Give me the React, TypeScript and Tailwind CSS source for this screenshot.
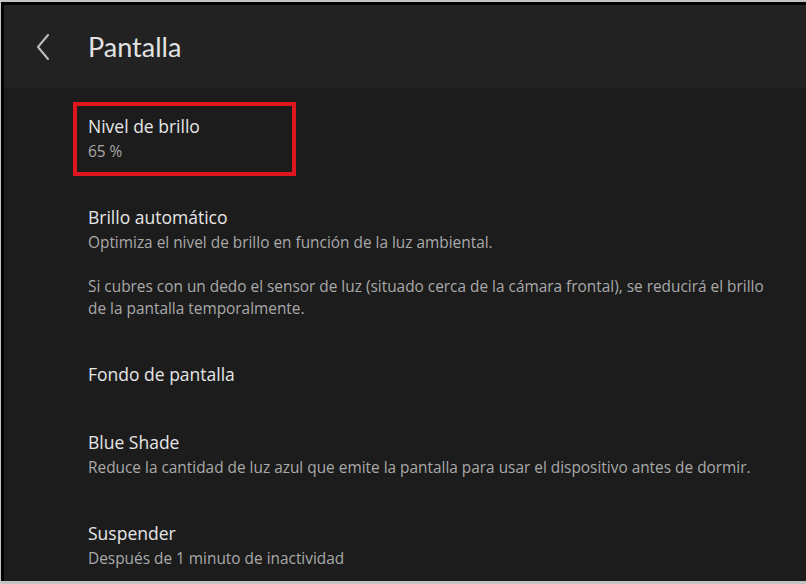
export default function App() {
  return (
    <div
      className="flex h-[584px] w-[806px] flex-col overflow-hidden bg-[#c4c4c4] pb-[3px] pl-px pt-[2px]"
      style={{ fontFamily: "'Open Sans', 'Noto Sans', sans-serif" }}
    >
      <div className="flex flex-1 flex-col overflow-hidden border-l-[3px] border-t-[3px] border-black">
        <header className="flex h-[83px] shrink-0 items-center bg-[#222222]">
          <svg width="14" height="26" viewBox="0 0 14 26" className="ml-[32px] text-[#bdbdbd]">
            <path d="M12 1 L2 13 L12 25" fill="none" stroke="currentColor" strokeWidth="2" strokeLinecap="round" strokeLinejoin="round" />
          </svg>
          <h1 className="ml-[38px] font-['Lato'] text-[27px] leading-none text-[#e2e2e2]">Pantalla</h1>
        </header>

        <main className="flex-1 bg-[#1c1c1c] pl-[84px] pr-6 pt-[4px]">
          <div className="relative py-5">
            <div className="pointer-events-none absolute -left-[15px] top-[10px] h-[74px] w-[223px] border-[4px] border-[#e0161f]" />
            <Title>Nivel de brillo</Title>
            <Sub>65 %</Sub>
          </div>

          <div className="py-5">
            <Title>Brillo automático</Title>
            <Sub>Optimiza el nivel de brillo en función de la luz ambiental.</Sub>
            <div className="h-[21px]" />
            <Sub>
              Si cubres con un dedo el sensor de luz (situado cerca de la cámara frontal), se reducirá el brillo de la
              pantalla temporalmente.
            </Sub>
          </div>

          <div className="py-5">
            <Title>Fondo de pantalla</Title>
          </div>

          <div className="py-5">
            <Title>Blue Shade</Title>
            <Sub>Reduce la cantidad de luz azul que emite la pantalla para usar el dispositivo antes de dormir.</Sub>
          </div>

          <div className="py-5">
            <Title>Suspender</Title>
            <Sub>Después de 1 minuto de inactividad</Sub>
          </div>
        </main>
      </div>
    </div>
  );
}

function Title({ children }: { children: React.ReactNode }) {
  return <div className="text-[17.5px] leading-[28px] text-[#e6e6e6]">{children}</div>;
}

function Sub({ children }: { children: React.ReactNode }) {
  return <div className="mt-px max-w-[690px] text-[15.4px] leading-[22px] text-[#a9a9a9]">{children}</div>;
}
